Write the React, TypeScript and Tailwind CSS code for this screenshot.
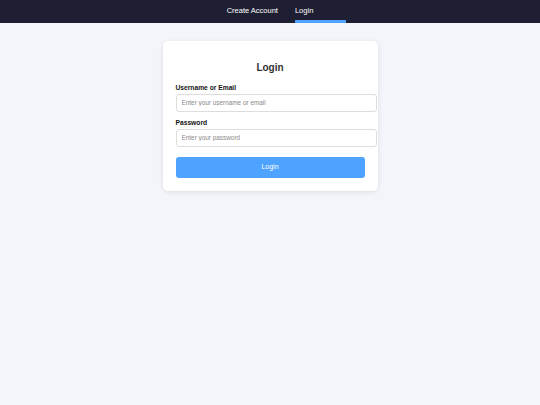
export default function App() {
  return (
    <div className="min-h-screen bg-[#f4f5fa] font-['Liberation_Sans',Arial,sans-serif]">
      <nav className="flex h-[23px] justify-center gap-[17px] bg-[#1f1f33]">
        <a className="relative pt-[6px] text-[7.5px] leading-[9px] text-white">Create Account</a>
        <a className="relative pt-[6px] text-[7.5px] leading-[9px] text-white">
          Login
          <span className="absolute bottom-0 left-0 h-[3px] w-[51px] bg-[#4da3ff]" />
        </a>
      </nav>

      <main className="flex justify-center pt-[18px]">
        <div className="w-[215px] rounded-[5px] bg-white p-[13px] shadow-[0_1px_5px_rgba(0,0,0,0.1)]">
          <h2 className="mt-[8px] mb-[10px] text-center text-[10px] leading-[12px] font-bold text-[#333]">
            Login
          </h2>

          <div className="mb-[6.5px]">
            <label className="mb-[2px] block text-[6.7px] leading-[8px] font-bold text-[#111]">
              Username or Email
            </label>
            <input
              type="text"
              placeholder="Enter your username or email"
              className="box-content block w-full rounded-[3px] border border-[#ddd] px-[5px] py-[4px] text-[6.4px] leading-[8px] outline-none placeholder:text-[#8a8a8a]"
            />
          </div>

          <div className="mb-[10px]">
            <label className="mb-[2px] block text-[6.7px] leading-[8px] font-bold text-[#111]">
              Password
            </label>
            <input
              type="password"
              placeholder="Enter your password"
              className="box-content block w-full rounded-[3px] border border-[#ddd] px-[5px] py-[4px] text-[6.4px] leading-[8px] outline-none placeholder:text-[#8a8a8a]"
            />
          </div>

          <button className="block h-[21px] w-full rounded-[3px] bg-[#4da3ff] text-[7px] text-white">
            Login
          </button>
        </div>
      </main>
    </div>
  );
}
